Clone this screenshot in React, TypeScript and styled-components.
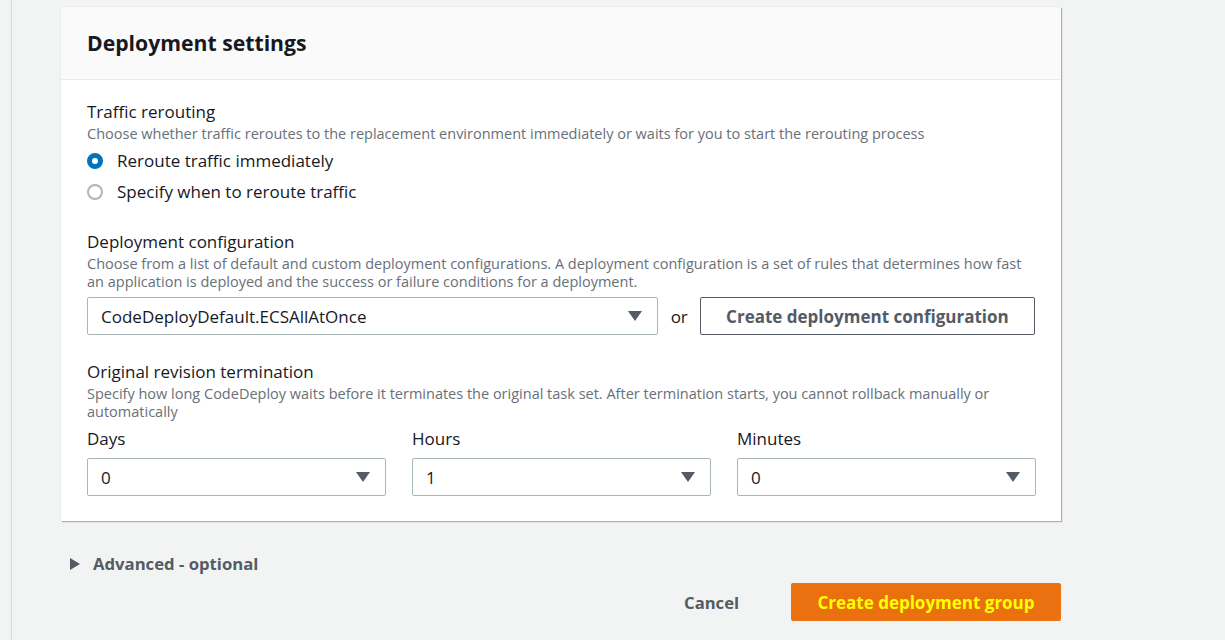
import React from 'react';
import styled, { createGlobalStyle } from 'styled-components';

const GlobalStyle = createGlobalStyle`
  html, body {
    margin: 0;
    padding: 0;
    background: #f2f3f3;
  }

  body {
    font-family: 'Open Sans', 'Noto Sans', Arial, sans-serif;
    color: #16191f;
  }
`;

const hourOptions = [
  { label: 'Days', value: '0' },
  { label: 'Hours', value: '1' },
  { label: 'Minutes', value: '0' },
];

function Caret() {
  return (
    <svg width='14' height='10' viewBox='0 0 14 10'>
      <polygon points='0,0 14,0 7,10' fill='#545b64' />
    </svg>
  );
}

function Select({ value, width }: { value: string; width?: number }) {
  return (
    <SelectBox $width={width}>
      <span>{value}</span>
      <Caret />
    </SelectBox>
  );
}

export default function App() {
  return (
    <Page>
      <GlobalStyle />
      <Rail />
      <Main>
        <Card>
          <CardHeader>
            <Title>Deployment settings</Title>
          </CardHeader>
          <CardBody>
            <Field>
              <Label>Traffic rerouting</Label>
              <Description>
                Choose whether traffic reroutes to the replacement environment
                immediately or waits for you to start the rerouting process
              </Description>
              <RadioGroup>
                <RadioRow>
                  <Radio $checked />
                  Reroute traffic immediately
                </RadioRow>
                <RadioRow>
                  <Radio />
                  Specify when to reroute traffic
                </RadioRow>
              </RadioGroup>
            </Field>

            <Field>
              <Label>Deployment configuration</Label>
              <Description>
                Choose from a list of default and custom deployment
                configurations. A deployment configuration is a set of rules
                that determines how fast an application is deployed and the
                success or failure conditions for a deployment.
              </Description>
              <ConfigRow>
                <Select value='CodeDeployDefault.ECSAllAtOnce' width={572} />
                <Or>or</Or>
                <OutlineButton>Create deployment configuration</OutlineButton>
              </ConfigRow>
            </Field>

            <Field>
              <Label>Original revision termination</Label>
              <Description>
                Specify how long CodeDeploy waits before it terminates the
                original task set. After termination starts, you cannot
                rollback manually or automatically
              </Description>
              <TimeGrid>
                {hourOptions.map((o) => (
                  <TimeCell key={o.label}>
                    <Label>{o.label}</Label>
                    <Select value={o.value} />
                  </TimeCell>
                ))}
              </TimeGrid>
            </Field>
          </CardBody>
        </Card>

        <Expander>
          <svg width='10' height='12' viewBox='0 0 10 12'>
            <polygon points='0,0 10,6 0,12' fill='#545b64' />
          </svg>
          Advanced - optional
        </Expander>

        <Actions>
          <LinkButton>Cancel</LinkButton>
          <PrimaryButton>
            <Highlight>Create deployment group</Highlight>
          </PrimaryButton>
        </Actions>
      </Main>
    </Page>
  );
}

const Page = styled.div`
  display: flex;
  min-height: 640px;
  background: #f2f3f3;
`;

const Rail = styled.div`
  width: 11px;
  flex-shrink: 0;
  border-right: 1px solid #d5dbdb;
`;

const Main = styled.div`
  display: flex;
  flex-direction: column;
  width: 1000px;
  padding: 7px 0 0 49px;
`;

const Card = styled.div`
  background: #fff;
  box-shadow: 1px 1px 1px 0 rgba(0, 28, 36, 0.3), -1px 0 0 0 #eaeded,
    0 -1px 0 0 #eaeded;
`;

const CardHeader = styled.div`
  display: flex;
  align-items: center;
  height: 72px;
  padding: 0 26px;
  background: #fafafa;
  border-bottom: 1px solid #eaeded;
`;

const Title = styled.h2`
  margin: 0;
  font-size: 21.2px;
  font-weight: 700;
  line-height: 28px;
  color: #16191f;
`;

const CardBody = styled.div`
  display: flex;
  flex-direction: column;
  gap: 24px;
  padding: 21px 26px 25px;
`;

const Field = styled.div`
  display: flex;
  flex-direction: column;
`;

const Label = styled.div`
  font-size: 17px;
  line-height: 22px;
  color: #16191f;
`;

const Description = styled.div`
  margin-top: 2px;
  font-size: 14.5px;
  line-height: 18px;
  color: #687078;
`;

const RadioGroup = styled.div`
  display: flex;
  flex-direction: column;
  margin-top: 2px;
`;

const RadioRow = styled.label`
  display: flex;
  align-items: center;
  gap: 14px;
  height: 31px;
  font-size: 17px;
  color: #16191f;
`;

const Radio = styled.span<{ $checked?: boolean }>`
  box-sizing: border-box;
  width: 16px;
  height: 16px;
  border-radius: 50%;
  background: #fff;
  border: ${({ $checked }) =>
    $checked ? '5px solid #0073bb' : '2px solid #aab7b8'};
`;

const ConfigRow = styled.div`
  display: flex;
  align-items: center;
  margin: 6px 0 2px;
`;

const SelectBox = styled.div<{ $width?: number }>`
  box-sizing: border-box;
  display: flex;
  align-items: center;
  justify-content: space-between;
  width: ${({ $width }) => ($width ? `${$width}px` : '100%')};
  height: 38px;
  padding: 0 15px 0 13px;
  border: 1px solid #aab7b8;
  border-radius: 2px;
  background: #fff;
  font-size: 17px;
  color: #16191f;
`;

const Or = styled.span`
  margin: 0 12px 0 13px;
  font-size: 17px;
  color: #16191f;
`;

const OutlineButton = styled.button`
  box-sizing: border-box;
  width: 336px;
  height: 38px;
  border: 1px solid #545b64;
  border-radius: 2px;
  background: #fff;
  font-family: inherit;
  font-size: 17px;
  font-weight: 700;
  color: #545b64;
`;

const TimeGrid = styled.div`
  display: grid;
  grid-template-columns: repeat(3, 299px);
  gap: 26px;
  margin-top: 7px;
`;

const TimeCell = styled.div`
  display: flex;
  flex-direction: column;
  gap: 8px;
`;

const Expander = styled.div`
  display: flex;
  align-items: center;
  gap: 13px;
  margin: 32px 0 0 9px;
  font-size: 16.7px;
  font-weight: 700;
  line-height: 22px;
  color: #545b64;
`;

const Actions = styled.div`
  display: flex;
  justify-content: flex-end;
  align-items: center;
  gap: 32px;
  margin-top: 8px;
`;

const LinkButton = styled.button`
  border: none;
  background: none;
  padding: 0 20px;
  font-family: inherit;
  font-size: 16.6px;
  font-weight: 700;
  color: #545b64;
`;

const PrimaryButton = styled.button`
  width: 270px;
  height: 38px;
  border: none;
  border-radius: 2px;
  background: #ec7211;
  font-family: inherit;
  font-size: 17px;
  font-weight: 700;
`;

const Highlight = styled.span`
  color: #ffff00;
  background: #ea6f0d;
`;
